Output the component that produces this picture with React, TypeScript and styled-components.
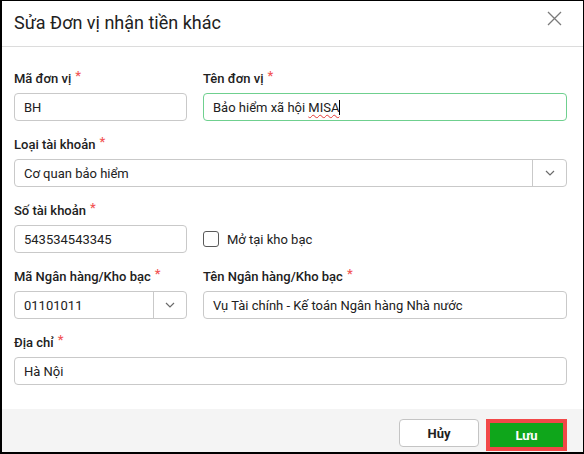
import styled, { createGlobalStyle } from "styled-components";

const GlobalStyle = createGlobalStyle`
  html, body {
    margin: 0;
    padding: 0;
    background: #ffffff;
  }
  body {
    font-family: Roboto, "Noto Sans", "Liberation Sans", sans-serif;
    color: #212121;
  }
`;

const Dialog = styled.div`
  box-sizing: border-box;
  width: 584px;
  height: 454px;
  border-style: solid;
  border-color: #000000;
  border-width: 1px 1px 2px 2px;
  background: #ffffff;
  display: flex;
  flex-direction: column;
`;

const Header = styled.div`
  height: 45px;
  flex: none;
  display: flex;
  align-items: center;
  justify-content: space-between;
  padding: 0 21px 0 12px;
  border-bottom: 1px solid #dcdcdc;
`;

const Title = styled.h1`
  margin: 0;
  font-size: 18px;
  font-weight: 400;
  line-height: 22px;
  color: #212121;
  position: relative;
  top: -1px;
`;

const CloseButton = styled.button`
  border: 0;
  background: transparent;
  padding: 0;
  width: 16px;
  height: 16px;
  display: flex;
  align-items: center;
  justify-content: center;
  cursor: pointer;
  position: relative;
  top: -5px;
`;

const Body = styled.div`
  flex: 1;
  min-height: 0;
  padding: 24px 16px 0 12px;
  display: grid;
  grid-template-columns: 173px 1fr;
  column-gap: 16px;
  row-gap: 16px;
  align-content: start;
`;

const Group = styled.div<{ $span?: boolean }>`
  display: flex;
  flex-direction: column;
  gap: 6px;
  grid-column: ${(p) => (p.$span ? "1 / -1" : "auto")};
`;

const CheckGroup = styled.div`
  display: flex;
  align-items: flex-end;
`;

const Label = styled.label`
  display: block;
  height: 16px;
  font-size: 13px;
  line-height: 16px;
  font-weight: 500;
  color: #212121;
  white-space: nowrap;
`;

const Star = styled.span`
  display: inline-block;
  color: #f25757;
  font-size: 13px;
  line-height: 0;
  margin-left: 4px;
  position: relative;
  top: -3px;
`;

const Field = styled.div<{ $focused?: boolean }>`
  box-sizing: border-box;
  height: 28px;
  display: flex;
  align-items: center;
  border: 1px solid ${(p) => (p.$focused ? "#6fd08f" : "#c9c9c9")};
  border-radius: 4px;
  background: #ffffff;
  font-size: 13px;
  color: #212121;
  overflow: hidden;
`;

const Value = styled.span`
  flex: 1;
  padding: 0 9px;
  white-space: nowrap;
`;

const Misspelled = styled.span`
  text-decoration: underline wavy #e53935;
  text-decoration-thickness: 1px;
  text-underline-offset: 2px;
`;

const Caret = styled.span`
  display: inline-block;
  width: 1px;
  height: 15px;
  background: #000000;
  vertical-align: -3px;
`;

const DropButton = styled.span<{ $w: number }>`
  flex: none;
  width: ${(p) => p.$w}px;
  height: 100%;
  border-left: 1px solid #c9c9c9;
  display: flex;
  align-items: center;
  justify-content: center;
`;

const CheckRow = styled.label`
  display: flex;
  align-items: center;
  gap: 8px;
  font-size: 13px;
  color: #212121;
  height: 28px;
`;

const Box = styled.span`
  box-sizing: border-box;
  width: 16px;
  height: 16px;
  border: 1.5px solid #5a5a5a;
  border-radius: 3px;
  background: #ffffff;
`;

const Footer = styled.div`
  height: 43px;
  flex: none;
  background: #f4f4f4;
  display: flex;
  justify-content: flex-end;
  align-items: flex-start;
  gap: 7px;
  padding: 10px 16px 0 0;
  box-sizing: border-box;
`;

const Button = styled.button<{ $primary?: boolean }>`
  box-sizing: border-box;
  font-family: Roboto, "Noto Sans", "Liberation Sans", sans-serif;
  font-size: 13px;
  font-weight: 700;
  cursor: pointer;
  border-radius: ${(p) => (p.$primary ? "0" : "4px")};
  width: ${(p) => (p.$primary ? "81px" : "80px")};
  height: ${(p) => (p.$primary ? "32px" : "28px")};
  border: ${(p) => (p.$primary ? "4px solid #f24848" : "1px solid #c4c4c4")};
  background: ${(p) => (p.$primary ? "#0fa61b" : "#ffffff")};
  color: ${(p) => (p.$primary ? "#ffffff" : "#212121")};
  padding: 0;
`;

function Chevron() {
  return (
    <svg width="10" height="6" viewBox="0 0 10 6" fill="none">
      <path d="M1 1l4 4 4-4" stroke="#6b6b6b" strokeWidth="1.2" />
    </svg>
  );
}

function Required({ children }: { children: string }) {
  return (
    <Label>
      {children}
      <Star>*</Star>
    </Label>
  );
}

export default function App() {
  return (
    <>
      <GlobalStyle />
      <Dialog>
        <Header>
          <Title>Sửa Đơn vị nhận tiền khác</Title>
          <CloseButton aria-label="Đóng">
            <svg width="15" height="15" viewBox="0 0 15 15">
              <path d="M1 1l13 13M14 1L1 14" stroke="#7a7a7a" strokeWidth="1.3" />
            </svg>
          </CloseButton>
        </Header>

        <Body>
          <Group>
            <Required>Mã đơn vị</Required>
            <Field>
              <Value>BH</Value>
            </Field>
          </Group>
          <Group>
            <Required>Tên đơn vị</Required>
            <Field $focused>
              <Value>
                Bảo hiểm xã hội <Misspelled>MISA</Misspelled>
                <Caret />
              </Value>
            </Field>
          </Group>

          <Group $span>
            <Required>Loại tài khoản</Required>
            <Field>
              <Value>Cơ quan bảo hiểm</Value>
              <DropButton $w={33}>
                <Chevron />
              </DropButton>
            </Field>
          </Group>

          <Group>
            <Required>Số tài khoản</Required>
            <Field>
              <Value>543534543345</Value>
            </Field>
          </Group>
          <CheckGroup>
            <CheckRow>
              <Box />
              Mở tại kho bạc
            </CheckRow>
          </CheckGroup>

          <Group>
            <Required>Mã Ngân hàng/Kho bạc</Required>
            <Field>
              <Value>01101011</Value>
              <DropButton $w={32}>
                <Chevron />
              </DropButton>
            </Field>
          </Group>
          <Group>
            <Required>Tên Ngân hàng/Kho bạc</Required>
            <Field>
              <Value>Vụ Tài chính - Kế toán Ngân hàng Nhà nước</Value>
            </Field>
          </Group>

          <Group $span>
            <Required>Địa chỉ</Required>
            <Field>
              <Value>Hà Nội</Value>
            </Field>
          </Group>
        </Body>

        <Footer>
          <Button>Hủy</Button>
          <Button $primary>Lưu</Button>
        </Footer>
      </Dialog>
    </>
  );
}
